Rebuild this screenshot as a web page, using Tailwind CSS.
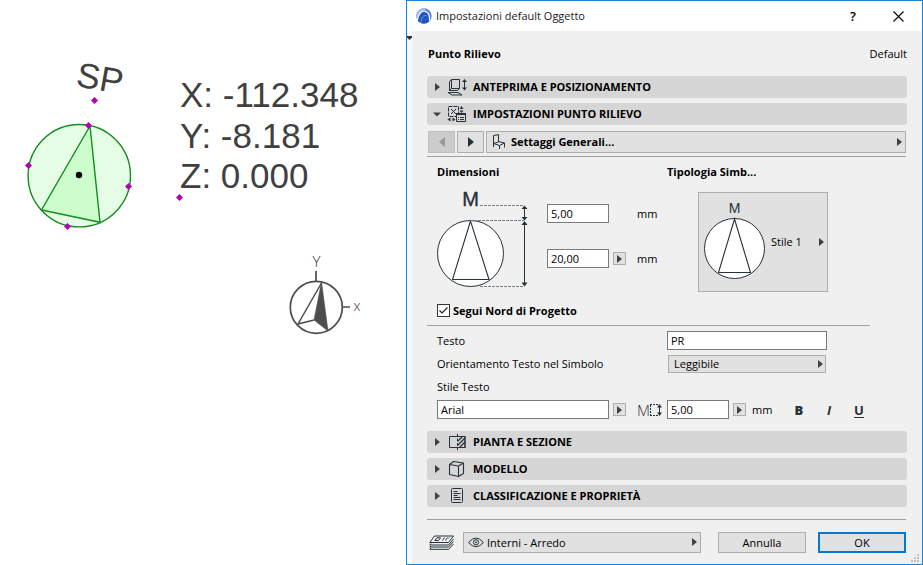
<!DOCTYPE html>
<html lang="it">
<head>
<meta charset="utf-8">
<title>Impostazioni default Oggetto</title>
<script src="https://cdn.jsdelivr.net/npm/@tailwindcss/browser@4"></script>
</head>
<body class="bg-white text-black text-[11px] leading-4 font-['Open_Sans','Noto_Sans',sans-serif]">
<svg class="hidden" aria-hidden="true">
  <symbol id="tri" viewBox="0 0 5 8"><path d="M0 0L5 4L0 8Z" fill="#404040"/></symbol>
</svg>
<div class="flex min-h-screen">

  <main class="w-[406px] shrink-0">
    <svg class="block" width="406" height="400" viewBox="0 0 406 400" role="img" aria-label="Punto rilievo">
      <g font-family="'Liberation Sans', Arial, sans-serif" font-size="35" fill="#404040">
        <text transform="translate(75 86) rotate(10)">SP</text>
        <text x="180" y="107">X: -112.348</text>
        <text x="180" y="148">Y: -8.181</text>
        <text x="180" y="188">Z: 0.000</text>
      </g>
      <g stroke="#148c1e" stroke-width="1.4">
        <circle cx="79.300" cy="175.700" r="51.200" fill="#e4fde4"/>
        <path d="M90 126L41.500 210L100 222.300Z" fill="#cdfccd"/>
      </g>
      <circle cx="79" cy="175" r="3.200" fill="#000"/>
      <g fill="#b400b4">
        <path d="M94.500 97l3.500 3.500l-3.500 3.500l-3.500-3.500z"/>
        <path d="M88.500 122l3.500 3.500l-3.500 3.500l-3.500-3.500z"/>
        <path d="M28.500 162l3.500 3.500l-3.500 3.500l-3.500-3.500z"/>
        <path d="M128.500 183l3.500 3.500l-3.500 3.500l-3.500-3.500z"/>
        <path d="M67.500 223l3.500 3.500l-3.500 3.500l-3.500-3.500z"/>
        <path d="M179.500 194l3.500 3.500l-3.500 3.500l-3.500-3.500z"/>
      </g>
      <g fill="none" stroke="#4d4d4d" stroke-width="1.700">
        <circle cx="316.300" cy="307.300" r="26"/>
        <path d="M316 271v10M342 307h8"/>
        <path d="M321.500 283L298 324L314 320" stroke-width="1.500"/>
        <path d="M321.500 282L314 320L328 331Z" fill="#4d4d4d" stroke-width=".6"/>
      </g>
      <g font-family="'Open Sans', sans-serif" font-weight="300" fill="#333" text-anchor="middle">
        <text x="316.500" y="267" font-size="15">Y</text>
        <text x="357" y="311" font-size="14">x</text>
      </g>
    </svg>
  </main>

  <section class="relative flex flex-1 flex-col border border-[#1883d7] bg-[#f0f0f0]" role="dialog" aria-labelledby="dlg-title">
    <header class="flex h-[30px] items-center bg-white pl-[9px] pr-[18px]">
      <svg width="16" height="16" viewBox="0 0 16 16" aria-hidden="true">
        <circle cx="8" cy="8" r="7.700" fill="#5f84cf"/>
        <path d="M.6 6.500A7.700 7.700 0 0 1 11 .9Q4 2.500 1 10.500Q.3 9 .6 6.500Z" fill="#a9bde6"/>
        <path d="M2 13C3 6 6 3.500 9 4C12.500 4.500 13.500 9 13.200 13.300A7.700 7.700 0 0 1 2 13Z" fill="#2456c0"/>
        <path d="M1.200 12.300C2.500 5 6 2.500 9.300 3.300C12.800 4.200 13.800 8.500 13.500 12.600" fill="none" stroke="#f2f6ff" stroke-width="1.200"/>
        <path d="M5 14.800C5.300 9 7.300 7 10.600 7.600" fill="none" stroke="#6d97ec" stroke-width="1"/>
      </svg>
      <h1 id="dlg-title" class="ml-1 flex-1 text-[#222]">Impostazioni default Oggetto</h1>
      <button class="mr-9 w-2 text-[13px] font-semibold" aria-label="Aiuto">?</button>
      <button aria-label="Chiudi"><svg width="11" height="11" viewBox="0 0 11 11"><path d="M.5 .5L10.500 10.500M10.500 .5L.5 10.500" stroke="#000" stroke-width="1.100"/></svg></button>
    </header>

    <div class="flex flex-1">
      <div class="w-[5px] shrink-0 bg-[#fafafa] pt-[5px]">
        <svg class="block" width="5" height="4" viewBox="0 0 5 4" aria-hidden="true"><path d="M0 0H5V1.500L2.500 4L0 1.500Z" fill="#333"/></svg>
      </div>
      <div class="flex flex-1 flex-col px-[15px]">
        <div class="flex h-[45px] items-center justify-between pl-px">
          <h2 class="font-bold">Punto Rilievo</h2>
          <span>Default</span>
        </div>

        <button class="flex h-[22px] items-center gap-[6px] rounded-[3px] bg-[#d6d6d6] pl-[6px] font-bold" aria-expanded="false">
          <span class="flex w-2 justify-center"><svg width="5" height="8"><use href="#tri"/></svg></span>
          <svg width="20" height="20" viewBox="0 0 20 20" fill="none" stroke="#263238" aria-hidden="true">
            <path d="M4.500 2.500h8v9h-8zM4.500 2.500L2.500 4.500v9h8l2-2M2.500 13.500l2-2M1 15.500h10l4 2.500H5z"/>
            <path d="M17.500 4v8"/><path d="M15 5l2.500-3L20 5zM15 10.500l2.500 3l2.500-3z" fill="#263238" stroke="none"/>
          </svg>
          ANTEPRIMA E POSIZIONAMENTO
        </button>
        <button class="mt-[5px] flex h-[22px] items-center gap-[6px] rounded-[3px] bg-[#d6d6d6] pl-[6px] font-bold" aria-expanded="true">
          <svg width="8" height="5" viewBox="0 0 8 5"><path d="M0 .5H8L4 4.500Z" fill="#404040"/></svg>
          <svg width="20" height="20" viewBox="0 0 20 20" fill="none" stroke="#263238" aria-hidden="true">
            <path d="M1.500 2.500h10v10h-10z" stroke-dasharray="4 1"/>
            <path d="M4 5l5 5M9 5l-5 5"/>
            <path d="M12.500 5L14.500 2L16.500 5zM12.500 6.500h4l-2 2.500zM3.500 13.500v4l-3-2zM5.500 13.500v4l3-2z" fill="#263238" stroke="none"/>
            <path d="M9.500 9.500h9v8h-9z" fill="#d6d6d6"/><path d="M9 10h10" stroke-width="2"/>
            <path d="M11 13.500h1M13 13.500h4M11 15.500h1M13 15.500h4"/>
          </svg>
          IMPOSTAZIONI PUNTO RILIEVO
        </button>

        <div class="mt-[6px] flex gap-[2px] pl-px pr-px">
          <button class="flex h-[22px] w-[27px] items-center justify-center border border-[#bfbfbf] bg-[#ccc]" aria-label="Pagina precedente" disabled><svg width="6" height="10" viewBox="0 0 6 10"><path d="M6 0L0 5L6 10Z" fill="#949a9d"/></svg></button>
          <button class="flex h-[22px] w-[27px] items-center justify-center border border-[#adadad] bg-[#e1e1e1]" aria-label="Pagina successiva"><svg width="6" height="10" viewBox="0 0 6 10"><path d="M0 0L6 5L0 10Z" fill="#263238"/></svg></button>
          <div class="relative flex-1">
            <select class="block h-[22px] w-full appearance-none border border-[#adadad] bg-[#e1e1e1] pl-6 font-bold" aria-label="Pagina"><option>Settaggi Generali...</option></select>
            <svg class="pointer-events-none absolute left-[7px] top-[3px]" width="14" height="16" viewBox="0 0 14 16" fill="none" stroke="#263238" stroke-linejoin="round"><path d="M.5 13V1.500L5.500 .6V8L.5 9.500L6.500 11.500L11.500 9L5.500 7.500M6.500 11.500V15M11.500 9V13.500"/></svg>
            <svg class="pointer-events-none absolute right-1 top-[7px]" width="5" height="8"><use href="#tri"/></svg>
          </div>
        </div>
        <hr class="mr-px mt-[3px] border-[#a0a0a0]">

        <div class="grid grid-cols-[230px_1fr] pl-[10px]">
          <div>
            <h3 class="h-[30px] font-bold leading-[30px]">Dimensioni</h3>
            <div class="flex h-[114px]">
              <svg class="w-[110px] overflow-visible" height="114" viewBox="0 0 110 114" aria-hidden="true">
                <text x="33.500" y="19" text-anchor="middle" font-family="'Liberation Sans', sans-serif" font-size="20" fill="#263238" stroke="#263238" stroke-width=".4">M</text>
                <g fill="none" stroke="#263238">
                  <circle cx="33.500" cy="66.500" r="33" fill="#fff"/>
                  <path d="M33.500 34L15.500 92.500H52Z" stroke-width="1.100"/>
                  <path d="M43 18.500H87M33 33.500H87M43 99.500H87" stroke="#7a7f82" stroke-dasharray="3 1"/>
                  <path d="M87.500 21v10M87.500 37v60"/>
                </g>
                <path d="M84.500 22L87.500 18.500L90.500 22zM84.500 30L87.500 33.500L90.500 30zM84.500 38L87.500 34L90.500 38zM84.500 95.500L87.500 99.500L90.500 95.500z" fill="#263238"/>
              </svg>
              <div class="flex flex-col gap-[26px] pt-[17px]">
                <div class="flex h-[19px] items-center">
                  <input class="h-[19px] w-[62px] border border-[#7a7a7a] bg-white px-[3px]" value="5,00" id="d1">
                  <label class="ml-7" for="d1">mm</label>
                </div>
                <div class="flex h-[19px] items-center">
                  <input class="h-[19px] w-[62px] border border-[#7a7a7a] bg-white px-[3px]" value="20,00" id="d2">
                  <button class="ml-1 flex size-[13px] items-center justify-center border border-[#adadad] bg-[#e1e1e1]" aria-label="Opzioni dimensione"><svg width="5" height="8"><use href="#tri"/></svg></button>
                  <label class="ml-[11px]" for="d2">mm</label>
                </div>
              </div>
            </div>
            <label class="flex h-[19px] items-center gap-[3px] font-bold">
              <span class="relative size-[13px]">
                <input type="checkbox" checked class="block size-[13px] appearance-none border border-[#333] bg-white">
                <svg class="pointer-events-none absolute inset-0" width="13" height="13" viewBox="0 0 13 13"><path d="M2.500 6.500L5 9L10.500 3.500" fill="none" stroke="#222" stroke-width="1.200"/></svg>
              </span>
              Segui Nord di Progetto
            </label>
          </div>
          <div>
            <h3 class="h-[30px] font-bold leading-[30px]">Tipologia Simb...</h3>
            <button class="ml-[31px] mt-[5px] flex h-[100px] w-[130px] items-center border border-[#adadad] bg-[#e1e1e1] pl-[5px] pr-[3px]">
              <svg class="overflow-visible" width="62" height="84" viewBox="0 0 62 84" aria-hidden="true">
                <text x="30.500" y="13" text-anchor="middle" font-family="'Liberation Sans', sans-serif" font-size="14" fill="#263238">M</text>
                <g fill="none" stroke="#263238"><circle cx="30.500" cy="48.500" r="30" fill="#fff"/><path d="M30.500 19L14.500 72.500H46.500Z" stroke-width="1.100"/></g>
              </svg>
              <span class="ml-[5px] flex-1 text-left">Stile 1</span>
              <svg width="5" height="8"><use href="#tri"/></svg>
            </button>
          </div>
        </div>
        <hr class="mr-[37px] mt-[5px] border-[#a0a0a0]">

        <div class="grid grid-cols-[230px_1fr] items-center gap-y-1 pl-[10px] pt-[5px]">
          <label for="testo">Testo</label>
          <input id="testo" class="h-[19px] w-[160px] border border-[#7a7a7a] bg-white px-[3px]" value="PR">
          <label for="orient">Orientamento Testo nel Simbolo</label>
          <div class="relative w-[160px] p-px">
            <select id="orient" class="block h-[18px] w-full appearance-none border border-[#adadad] bg-[#e1e1e1] pl-[5px]"><option>Leggibile</option></select>
            <svg class="pointer-events-none absolute right-1 top-[6px]" width="5" height="8"><use href="#tri"/></svg>
          </div>
          <label class="h-[18px] leading-[18px]" for="font">Stile Testo</label>
        </div>
        <div class="mt-1 flex h-[19px] items-center pl-[10px]">
          <input id="font" class="h-[19px] w-[172px] border border-[#7a7a7a] bg-white px-[3px]" value="Arial">
          <button class="ml-1 flex size-[13px] items-center justify-center border border-[#adadad] bg-[#e1e1e1]" aria-label="Scegli font"><svg width="5" height="8"><use href="#tri"/></svg></button>
          <svg class="ml-3 overflow-visible" width="25" height="14" viewBox="0 0 25 14" aria-hidden="true">
            <text x="-1" y="13" font-family="'Open Sans', sans-serif" font-weight="300" font-size="15" fill="#263238">M</text>
            <path d="M12 1.500h8M12 12.500h8" stroke="#263238" stroke-dasharray="2 1"/>
            <path d="M12.500 2v10" stroke="#263238" stroke-dasharray="2 1"/>
            <path d="M21.500 3v8" stroke="#263238"/><path d="M19 4.500L21.500 1L24 4.500zM19 9.500L21.500 13L24 9.500z" fill="#263238"/>
          </svg>
          <input class="ml-1 h-[19px] w-[62px] border border-[#7a7a7a] bg-white px-[3px]" value="5,00" id="size">
          <button class="ml-1 flex size-[13px] items-center justify-center border border-[#adadad] bg-[#e1e1e1]" aria-label="Opzioni altezza"><svg width="5" height="8"><use href="#tri"/></svg></button>
          <label class="ml-[6px] w-[39px]" for="size">mm</label>
          <div class="flex gap-[14px] text-[13px] font-bold text-[#263238]">
            <button class="w-4 font-extrabold" aria-label="Grassetto">B</button>
            <button class="w-4 italic" aria-label="Corsivo">I</button>
            <button class="w-4 underline underline-offset-2" aria-label="Sottolineato">U</button>
          </div>
        </div>

        <div class="mt-3 flex flex-col gap-[5px]">
          <button class="flex h-[22px] items-center gap-[6px] rounded-[3px] bg-[#d6d6d6] pl-[6px] font-bold" aria-expanded="false">
            <span class="flex w-2 justify-center"><svg width="5" height="8"><use href="#tri"/></svg></span>
            <svg width="20" height="20" viewBox="0 0 20 20" fill="none" stroke="#263238" aria-hidden="true">
              <path d="M10 4.500H2.500v11H10M10.500 2v3M10.500 6.500v3M10.500 11v3M10.500 15v3"/>
              <path d="M11 4.500h7M11 15.500h7"/><path d="M18 4v12" stroke-width="1.500"/><path d="M11 9L15.500 4.500M11 13L18 6M12.500 15.500L18 10" stroke-width="1.300"/>
            </svg>
            PIANTA E SEZIONE
          </button>
          <button class="flex h-[22px] items-center gap-[6px] rounded-[3px] bg-[#d6d6d6] pl-[6px] font-bold" aria-expanded="false">
            <span class="flex w-2 justify-center"><svg width="5" height="8"><use href="#tri"/></svg></span>
            <svg width="20" height="20" viewBox="0 0 20 20" fill="none" stroke="#263238" stroke-width="1.100" stroke-linejoin="round" aria-hidden="true"><path d="M2.500 5.500L11.500 7V17.500L2.500 15.500ZM2.500 5.500L6.500 2.500L16.500 4L11.500 7M16.500 4V14.500L11.500 17.500"/></svg>
            MODELLO
          </button>
          <button class="flex h-[22px] items-center gap-[6px] rounded-[3px] bg-[#d6d6d6] pl-[6px] font-bold" aria-expanded="false">
            <span class="flex w-2 justify-center"><svg width="5" height="8"><use href="#tri"/></svg></span>
            <svg width="20" height="20" viewBox="0 0 20 20" fill="none" stroke="#263238" aria-hidden="true"><rect x="4.500" y="2.500" width="11" height="14" rx="1"/><path d="M6.500 5.500h4M6.500 7.500h7M6.500 9.500h4M6.500 11.500h7M6.500 13.500h7"/></svg>
            CLASSIFICAZIONE E PROPRIETÀ
          </button>
        </div>

        <hr class="mr-px mt-3 border-[#a0a0a0]">
        <footer class="mt-3 flex items-center pb-[11px] pl-[2px] pr-px">
          <svg width="25" height="15" viewBox="0 0 25 15" fill="none" stroke="#263238" aria-hidden="true">
            <path d="M5.500 1H24.500L19.500 7.500H.8ZM2 8.500L.8 10H19.500L24.500 4M2 11L.8 12H19.500L24.500 6.500M2 13L.8 14.300H19.500L24.500 9"/>
            <path d="M8 2.800h3.500L9.500 5.500H5.800zM13.500 5.500l2-3M16.500 5.500l2-3M19.500 3.500l.8-1"/>
          </svg>
          <div class="relative ml-[9px] flex-1">
            <select class="block h-[21px] w-full appearance-none border border-[#adadad] bg-[#e1e1e1] pl-[23px]" aria-label="Lucido"><option>Interni - Arredo</option></select>
            <svg class="pointer-events-none absolute left-[5px] top-[5px]" width="16" height="11" viewBox="0 0 16 11" fill="none" stroke="#263238"><path d="M.6 5.500Q8-3.500 15.400 5.500Q8 14 .6 5.500Z"/><circle cx="8" cy="5.300" r="2.600"/><circle cx="8" cy="5.300" r=".6"/></svg>
            <svg class="pointer-events-none absolute right-1 top-[6px]" width="5" height="8"><use href="#tri"/></svg>
          </div>
          <button class="ml-[17px] h-[21px] w-[88px] border border-[#adadad] bg-[#e1e1e1]">Annulla</button>
          <button class="ml-3 h-[21px] w-[88px] border-2 border-[#0078d7] bg-[#e1e1e1]">OK</button>
        </footer>
      </div>
    </div>
    <svg class="absolute bottom-[2px] right-[3px]" width="8" height="8" viewBox="0 0 8 8" fill="#bfbfbf" aria-hidden="true"><path d="M6 0h2v2h-2zM3 3h2v2h-2zM6 3h2v2h-2zM0 6h2v2h-2zM3 6h2v2h-2zM6 6h2v2h-2z"/></svg>
  </section>
</div>
</body>
</html>
